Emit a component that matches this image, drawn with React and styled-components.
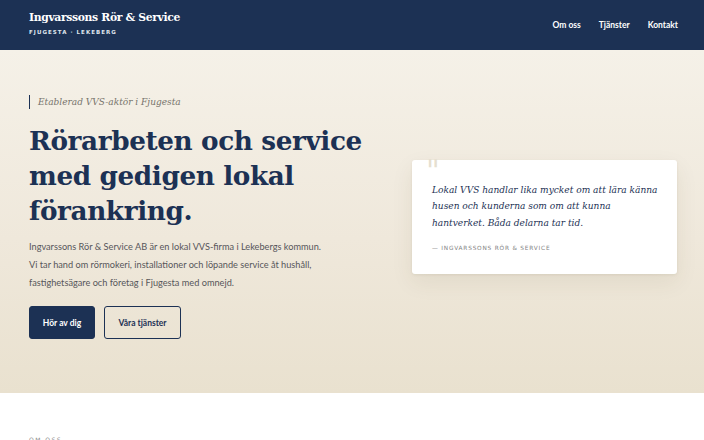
import React from "react";
import styled, { createGlobalStyle } from "styled-components";

const GlobalStyle = createGlobalStyle`
  * { box-sizing: border-box; }
  html, body { margin: 0; padding: 0; background: #ffffff; }
  body { font-family: "Lato", "Liberation Sans", sans-serif; color: #1c3154; }
`;

const navy = "#1c3154";

const Header = styled.header`
  background: ${navy};
  height: 50px;
  padding: 0 26px 0 29px;
  display: flex;
  align-items: center;
  justify-content: space-between;
`;

const Brand = styled.div`
  display: flex;
  flex-direction: column;
  gap: 5px;
  margin-top: -3px;
`;

const BrandTitle = styled.div`
  font-family: "DejaVu Serif", "Liberation Serif", serif;
  font-weight: 700;
  font-size: 10.8px;
  letter-spacing: -0.35px;
  color: #ffffff;
  line-height: 1.1;
`;

const BrandSub = styled.div`
  font-family: "DejaVu Sans", sans-serif;
  font-weight: 700;
  font-size: 5.5px;
  letter-spacing: 1.05px;
  color: #dfe4ec;
`;

const Nav = styled.nav`
  display: flex;
  gap: 18px;
`;

const NavLink = styled.a`
  font-family: "Lato", sans-serif;
  font-weight: 700;
  font-size: 8.5px;
  color: #ffffff;
  text-decoration: none;
`;

const Hero = styled.section`
  background: linear-gradient(180deg, #f5f1e8 0%, #efe8db 55%, #e9e1cf 100%);
  padding: 45px 27px 54px 29px;
  display: grid;
  grid-template-columns: 1fr 265px;
  column-gap: 40px;
  align-items: center;
`;

const HeroText = styled.div`
  display: flex;
  flex-direction: column;
`;

const Eyebrow = styled.div`
  border-left: 1.5px solid ${navy};
  padding-left: 8px;
  font-family: "DejaVu Serif", "Liberation Serif", serif;
  font-style: italic;
  font-size: 9px;
  line-height: 14px;
  color: #77746c;
`;

const Title = styled.h1`
  margin: 14px 0 0;
  font-family: "DejaVu Serif", "Liberation Serif", serif;
  font-weight: 700;
  font-size: 26.3px;
  line-height: 35px;
  letter-spacing: -0.4px;
  color: ${navy};
`;

const Lead = styled.p`
  margin: 10px 0 0;
  font-family: "Lato", sans-serif;
  font-size: 9.2px;
  line-height: 18px;
  color: #57565a;
`;

const Actions = styled.div`
  display: flex;
  gap: 9px;
  margin-top: 14px;
`;

const Button = styled.a`
  display: inline-flex;
  align-items: center;
  justify-content: center;
  height: 33px;
  width: ${(p) => p.$w}px;
  border-radius: 3px;
  font-family: "Lato", sans-serif;
  font-weight: 700;
  font-size: 8.5px;
  text-decoration: none;
  background: ${(p) => (p.$primary ? navy : "transparent")};
  color: ${(p) => (p.$primary ? "#ffffff" : navy)};
  border: 1px solid ${navy};
`;

const Card = styled.figure`
  position: relative;
  margin: 0;
  background: #ffffff;
  border-radius: 3px;
  padding: 22px 14px 23px 20px;
  box-shadow: 0 8px 22px rgba(80, 60, 30, 0.08), 0 1px 3px rgba(80, 60, 30, 0.08);
`;

const QuoteMark = styled.span`
  position: absolute;
  left: 14px;
  top: -4px;
  font-family: "DejaVu Serif", serif;
  font-size: 30px;
  line-height: 1;
  color: #e6dfd0;
`;

const Quote = styled.blockquote`
  margin: 0;
  font-family: "DejaVu Serif", "Liberation Serif", serif;
  font-style: italic;
  font-size: 9.05px;
  line-height: 16.5px;
  color: ${navy};
`;

const Cite = styled.figcaption`
  margin-top: 14px;
  font-family: "DejaVu Sans", sans-serif;
  font-size: 5.8px;
  letter-spacing: 0.8px;
  color: #848484;
`;

const About = styled.section`
  padding: 43px 29px 60px;
  background: #ffffff;
`;

const SectionLabel = styled.div`
  font-family: "DejaVu Sans", sans-serif;
  font-size: 6px;
  letter-spacing: 1.5px;
  color: #8a8a8a;
`;

const SectionTitle = styled.h2`
  margin: 30px 0 0;
  font-family: "DejaVu Serif", serif;
  font-size: 20px;
  color: ${navy};
`;

export default function App() {
  return (
    <>
      <GlobalStyle />
      <Header>
        <Brand>
          <BrandTitle>Ingvarssons Rör &amp; Service</BrandTitle>
          <BrandSub>FJUGESTA · LEKEBERG</BrandSub>
        </Brand>
        <Nav>
          <NavLink href="#om">Om oss</NavLink>
          <NavLink href="#tjanster">Tjänster</NavLink>
          <NavLink href="#kontakt">Kontakt</NavLink>
        </Nav>
      </Header>
      <Hero>
        <HeroText>
          <Eyebrow>Etablerad VVS-aktör i Fjugesta</Eyebrow>
          <Title>
            Rörarbeten och service
            <br />
            med gedigen lokal
            <br />
            förankring.
          </Title>
          <Lead>
            Ingvarssons Rör &amp; Service AB är en lokal VVS-firma i Lekebergs kommun.
            <br />
            Vi tar hand om rörmokeri, installationer och löpande service åt hushåll,
            <br />
            fastighetsägare och företag i Fjugesta med omnejd.
          </Lead>
          <Actions>
            <Button $primary $w={66} href="#kontakt">Hör av dig</Button>
            <Button $w={77} href="#tjanster">Våra tjänster</Button>
          </Actions>
        </HeroText>
        <Card>
          <QuoteMark>"</QuoteMark>
          <Quote>
            Lokal VVS handlar lika mycket om att lära känna
            <br />
            husen och kunderna som om att kunna
            <br />
            hantverket. Båda delarna tar tid.
          </Quote>
          <Cite>— INGVARSSONS RÖR &amp; SERVICE</Cite>
        </Card>
      </Hero>
      <About id="om">
        <SectionLabel>OM OSS</SectionLabel>
        <SectionTitle>Ett familjeföretag med rötterna i bygden</SectionTitle>
      </About>
    </>
  );
}
